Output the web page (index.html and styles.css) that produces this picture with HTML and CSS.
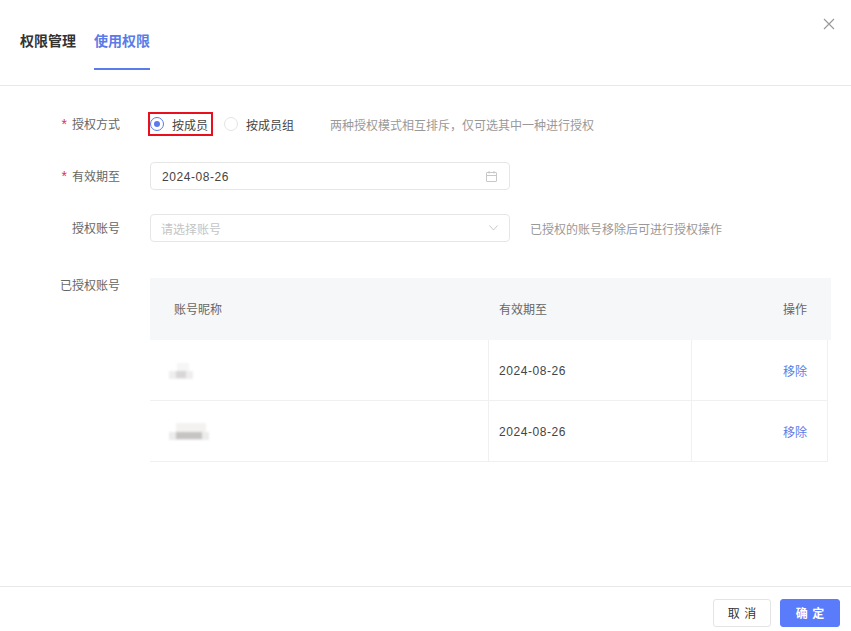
FILE: index.html
```html
<!DOCTYPE html>
<html lang="en">
<head>
    <meta charset="UTF-8">
    <meta name="viewport" content="width=device-width, initial-scale=1.0">
    <title>使用权限</title>
    <link rel="stylesheet" href="styles.css">
</head>
<body>
    <div class="dialog">
        <!-- Tabs -->
        <header class="tabs">
            <div class="tab">权限管理</div>
            <div class="tab active">使用权限</div>
            <button class="close" aria-label="关闭">
                <svg width="12" height="12" viewBox="0 0 12 12"><path d="M1 1 L11 11 M11 1 L1 11" stroke="#9a9a9a" stroke-width="1.2" fill="none"/></svg>
            </button>
        </header>

        <main class="form">
            <div class="row row-first">
                <label class="label required">授权方式</label>
                <div class="radios">
                    <div class="radio-marked">
                        <span class="radio checked"></span>
                        <span class="radio-text">按成员</span>
                    </div>
                    <div class="radio-plain">
                        <span class="radio"></span>
                        <span class="radio-text">按成员组</span>
                    </div>
                </div>
                <span class="hint hint-radio">两种授权模式相互排斥，仅可选其中一种进行授权</span>
            </div>

            <div class="row">
                <label class="label required">有效期至</label>
                <div class="input">
                    <span class="value">2024-08-26</span>
                    <svg class="calendar" width="11" height="11" viewBox="0 0 11 11" fill="none" stroke="#c8c8c8"><rect x="0.5" y="1.5" width="10" height="9" rx="0.5"/><path d="M0.5 4.5 H10.5 M3 0 V2.5 M8 0 V2.5"/></svg>
                </div>
            </div>

            <div class="row">
                <label class="label">授权账号</label>
                <div class="input">
                    <span class="placeholder">请选择账号</span>
                    <svg class="arrow" width="9" height="6" viewBox="0 0 9 6" fill="none" stroke="#c8c8c8"><path d="M0.5 0.5 L4.5 5 L8.5 0.5"/></svg>
                </div>
                <span class="hint">已授权的账号移除后可进行授权操作</span>
            </div>

            <div class="table-row">
                <label class="label">已授权账号</label>
                <div class="table">
                    <div class="thead">
                        <div class="th col-name">账号昵称</div>
                        <div class="th col-date">有效期至</div>
                        <div class="th col-op">操作</div>
                    </div>
                    <div class="tr">
                        <div class="td col-name"><span class="blur blur-short"></span></div>
                        <div class="td col-date">2024-08-26</div>
                        <div class="td col-op"><a class="link">移除</a></div>
                    </div>
                    <div class="tr">
                        <div class="td col-name"><span class="blur blur-long"></span></div>
                        <div class="td col-date">2024-08-26</div>
                        <div class="td col-op"><a class="link">移除</a></div>
                    </div>
                </div>
            </div>
        </main>

        <footer class="footer">
            <button class="btn">取 消</button>
            <button class="btn primary">确 定</button>
        </footer>
    </div>
</body>
</html>
```

FILE: styles.css
```css
/* Basic Reset */
* {
    margin: 0;
    padding: 0;
    box-sizing: border-box;
}

body {
    font-family: "Liberation Sans", "Noto Sans CJK SC", sans-serif;
    font-size: 12px;
    background-color: #fff;
    color: #333;
}

.dialog {
    width: 851px;
    height: 631px;
    display: flex;
    flex-direction: column;
    overflow: hidden;
}

/* Tabs */
.tabs {
    display: flex;
    gap: 18px;
    height: 86px;
    padding-left: 20px;
    border-bottom: 1px solid #e8e8e8;
    position: relative;
}

.tab {
    height: 70px;
    padding-top: 31px;
    line-height: 20px;
    font-size: 14px;
    font-weight: 700;
    color: #333;
}

.tab.active {
    color: #5b7be8;
    border-bottom: 2px solid #5b7be8;
}

.close {
    position: absolute;
    top: 18px;
    right: 16px;
    width: 12px;
    height: 12px;
    border: none;
    background: none;
    display: flex;
}

/* Form */
.form {
    flex: 1;
}

.row {
    display: flex;
    align-items: center;
    height: 28px;
    margin-bottom: 24px;
}

.row-first {
    margin-top: 24px;
}

.label {
    width: 120px;
    flex-shrink: 0;
    padding-top: 2px;
    text-align: right;
    color: #666;
    line-height: 20px;
}

.label.required {
    padding-top: 0;
}

.required::before {
    content: "*";
    font-size: 14px;
    color: #d9363e;
    margin-right: 5px;
}

.radios {
    display: flex;
    align-items: center;
    margin-left: 28px;
}

.radio-marked {
    display: flex;
    align-items: center;
    gap: 8px;
    width: 65px;
    height: 24px;
    padding-left: 2px;
    border: 2px solid #e8101c;
    margin-right: 11px;
}

.radio-marked .radio {
    margin-left: -2px;
}

.radio-plain {
    display: flex;
    align-items: center;
    gap: 8px;
}

.radio {
    width: 14px;
    height: 14px;
    border: 1px solid #e4e4e4;
    border-radius: 50%;
    flex-shrink: 0;
    display: flex;
    align-items: center;
    justify-content: center;
}

.radio.checked {
    border-color: #5b7be8;
}

.radio.checked::after {
    content: "";
    width: 6px;
    height: 6px;
    border-radius: 50%;
    background-color: #5b7be8;
}

.radio-text {
    color: #444;
}

.hint {
    color: #999;
    margin-left: 20px;
}

.hint-radio {
    margin-left: 36px;
}

.input {
    width: 360px;
    height: 28px;
    margin-left: 30px;
    border: 1px solid #e6e6e6;
    border-radius: 4px;
    padding: 0 12px 0 11px;
    display: flex;
    align-items: center;
    justify-content: space-between;
}

.value {
    padding-top: 2px;
    color: #444;
    letter-spacing: 0.55px;
}

.placeholder {
    margin-left: -1px;
    color: #c4c4c4;
}

.arrow {
    margin-right: -1px;
}

/* Table */
.table-row {
    display: flex;
    margin-top: 36px;
}

.table-row .label {
    padding-top: 1px;
    height: 16px;
    line-height: 14px;
}

.table {
    margin-left: 30px;
    width: 681px;
}

.thead {
    display: flex;
    height: 62px;
    align-items: center;
    background-color: #f6f7f9;
}

.th {
    padding-bottom: 2px;
    color: #666;
}

.tr {
    display: flex;
    height: 61px;
    width: 678px;
    border-bottom: 1px solid #f0f0f0;
    border-right: 1px solid #f0f0f0;
}

.td {
    display: flex;
    align-items: center;
    color: #444;
}

.td + .td {
    border-left: 1px solid #f0f0f0;
}

.col-name {
    width: 338px;
    padding-left: 24px;
}

.td.col-name {
    padding-left: 18px;
}

.col-date {
    width: 203px;
    padding-left: 11px;
}

.td.col-date {
    padding-left: 10px;
    padding-top: 2px;
    letter-spacing: 0.55px;
}

.col-op {
    width: 136px;
    justify-content: flex-end;
    padding-right: 20px;
    display: flex;
}

.th.col-op {
    padding-right: 24px;
    width: 140px;
}

.link {
    color: #5b7be8;
}

/* Redacted account names */
.blur {
    display: block;
    filter: blur(1.2px);
    background-repeat: no-repeat;
}

.blur-short {
    width: 28px;
    height: 18px;
    background-image:
        linear-gradient(#d8d6d6, #d8d6d6),
        linear-gradient(#efeeee, #efeeee),
        linear-gradient(#f6f6f6, #f6f6f6);
    background-size: 10px 7px, 24px 8px, 12px 8px;
    background-position: 8px 10px, 1px 10px, 9px 2px;
}

.blur-long {
    width: 44px;
    height: 18px;
    background-image:
        linear-gradient(#c6c3c3, #c6c3c3),
        linear-gradient(#ececec, #ececec),
        linear-gradient(#f3f2f1, #f3f2f1);
    background-size: 26px 7px, 40px 8px, 30px 9px;
    background-position: 8px 10px, 1px 10px, 8px 1px;
}

/* Footer */
.footer {
    display: flex;
    justify-content: flex-end;
    gap: 9px;
    height: 45px;
    padding: 12px 11px 0 0;
    border-top: 1px solid #e8e8e8;
}

.btn {
    font-family: inherit;
    font-size: 12px;
    word-spacing: 1px;
    width: 58px;
    height: 28px;
    padding-bottom: 2px;
    border: 1px solid #e4e4e4;
    border-radius: 3px;
    background-color: #fff;
    color: #333;
}

.btn.primary {
    width: 60px;
    background-color: #5b7cfa;
    border-color: #5b7cfa;
    color: #fff;
    font-weight: 700;
}
```
